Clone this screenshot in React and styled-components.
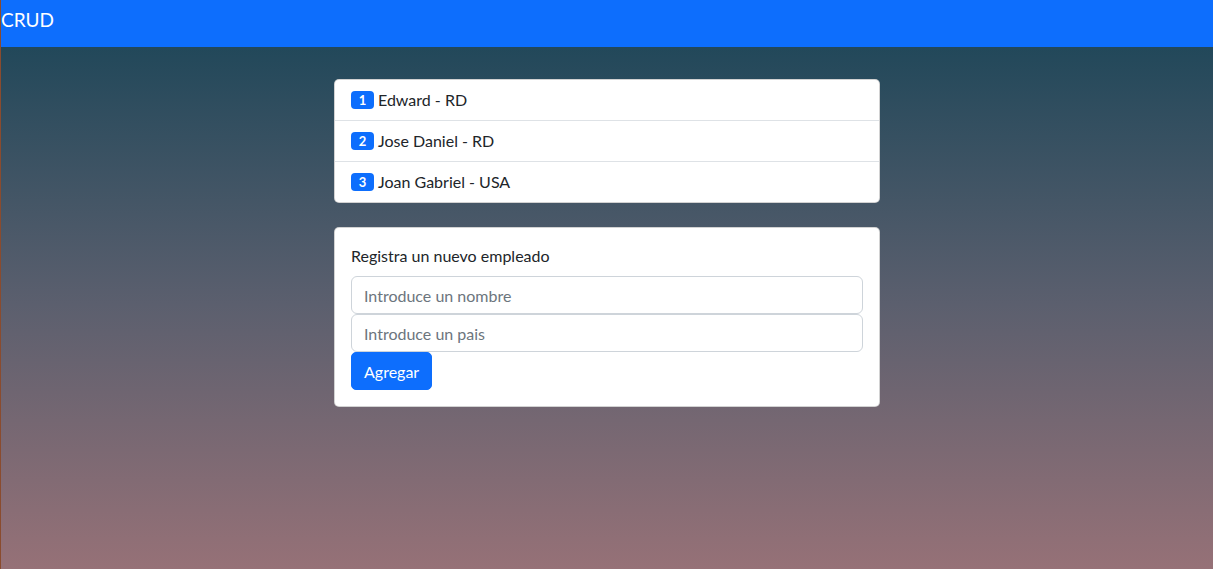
import styled, { createGlobalStyle } from "styled-components";

const GlobalStyle = createGlobalStyle`
  html, body {
    margin: 0;
    padding: 0;
  }
  body {
    background: #8a4b2e;
    font-family: Lato, "Noto Sans", Arial, sans-serif;
    font-size: 16px;
    color: #212529;
  }
  * {
    box-sizing: border-box;
  }
`;

const Page = styled.div`
  margin-left: 1px;
  min-height: 569px;
  display: flex;
  flex-direction: column;
`;

const Navbar = styled.nav`
  height: 47px;
  background: #0d6efd;
  display: flex;
  align-items: flex-start;
  padding-top: 5px;
`;

const Brand = styled.span`
  color: #fff;
  font-size: 19px;
  line-height: 30px;
`;

const Main = styled.main`
  flex: 1;
  background: linear-gradient(180deg, #22485a 0%, #5b5f6e 49%, #967177 100%);
`;

const Container = styled.div`
  width: 546px;
  margin: 32px auto 0;
  display: flex;
  flex-direction: column;
  gap: 24px;
`;

const ListGroup = styled.ul`
  list-style: none;
  margin: 0;
  padding: 0;
  background: #fff;
  border: 1px solid rgba(0, 0, 0, 0.175);
  border-radius: 5px;
`;

const Item = styled.li`
  display: flex;
  align-items: center;
  gap: 4px;
  padding: 8px 16px;
  line-height: 24px;
  & + & {
    border-top: 1px solid #dee2e6;
  }
`;

const Badge = styled.span`
  display: inline-block;
  min-width: 23px;
  padding: 3px 7px;
  background: #0d6efd;
  color: #fff;
  border-radius: 4px;
  font-size: 13px;
  line-height: 12px;
  font-weight: 700;
  text-align: center;
`;

const Card = styled.form`
  background: #fff;
  border: 1px solid rgba(0, 0, 0, 0.175);
  border-radius: 5px;
  padding: 16px;
  display: flex;
  flex-direction: column;
  align-items: flex-start;
`;

const Title = styled.p`
  margin: 0 0 8px;
  line-height: 24px;
`;

const Input = styled.input`
  width: 100%;
  height: 38px;
  padding: 6px 12px;
  font: inherit;
  color: #212529;
  border: 1px solid #ced4da;
  border-radius: 6px;
  outline: none;
  &::placeholder {
    color: #6c757d;
  }
`;

const Button = styled.button`
  height: 38px;
  padding: 6px 12px;
  font: inherit;
  color: #fff;
  background: #0d6efd;
  border: 1px solid #0d6efd;
  border-radius: 5px;
  cursor: pointer;
`;

const empleados = [
  { id: 1, nombre: "Edward", pais: "RD" },
  { id: 2, nombre: "Jose Daniel", pais: "RD" },
  { id: 3, nombre: "Joan Gabriel", pais: "USA" },
];

export default function App() {
  return (
    <>
      <GlobalStyle />
      <Page>
        <Navbar>
          <Brand>CRUD</Brand>
        </Navbar>
        <Main>
          <Container>
            <ListGroup>
              {empleados.map((e) => (
                <Item key={e.id}>
                  <Badge>{e.id}</Badge>
                  {e.nombre} - {e.pais}
                </Item>
              ))}
            </ListGroup>
            <Card onSubmit={(ev) => ev.preventDefault()}>
              <Title>Registra un nuevo empleado</Title>
              <Input placeholder="Introduce un nombre" />
              <Input placeholder="Introduce un pais" />
              <Button type="submit">Agregar</Button>
            </Card>
          </Container>
        </Main>
      </Page>
    </>
  );
}
